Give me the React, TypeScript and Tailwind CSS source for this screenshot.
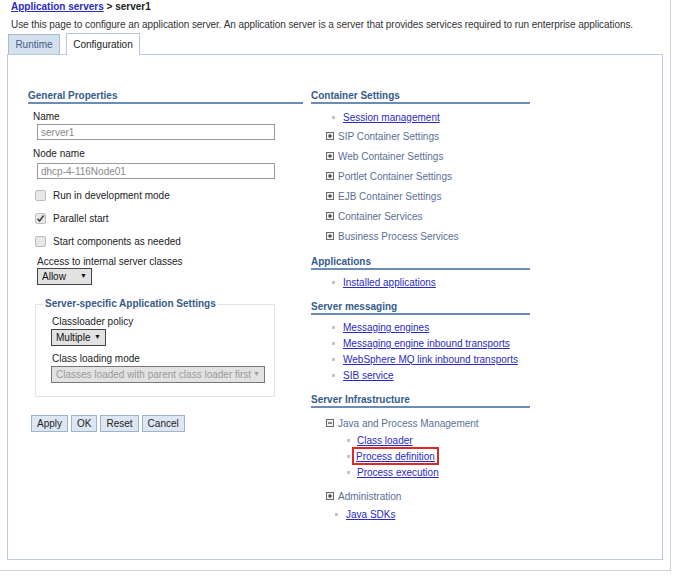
import React from "react";

const font = "font-['Liberation_Sans',Arial,sans-serif]";

function Heading({ children }: { children: React.ReactNode }) {
  return (
    <div className="border-b-2 border-[#6b8cb5] text-[10px] font-bold leading-[13px] text-[#365b8a]">
      {children}
    </div>
  );
}

function Bullet() {
  return <span className="inline-block h-[3px] w-[3px] bg-[#c4c4c4]" />;
}

function BulletLink({ label, indent, gap }: { label: string; indent: string; gap: string }) {
  return (
    <div className={`flex h-[16px] items-center ${indent}`}>
      <Bullet />
      <a href="#" className={`${gap} text-[10px] text-[#2a2ac4] underline`}>
        {label}
      </a>
    </div>
  );
}

function TreeIcon({ open }: { open?: boolean }) {
  return (
    <svg width="8" height="8" viewBox="0 0 8 8" className="shrink-0">
      <rect x="0.5" y="0.5" width="7" height="7" fill="#f2f2f2" stroke="#6a6a6a" />
      <path d="M2 4h4" stroke="#222" />
      {!open && <path d="M4 2v4" stroke="#222" />}
    </svg>
  );
}

function TreeRow({ label, open, h = "h-[20px]" }: { label: string; open?: boolean; h?: string }) {
  return (
    <div className={`flex ${h} items-center pl-[15px]`}>
      <TreeIcon open={open} />
      <span className="ml-[4px] text-[10px] text-[#5a7094]">{label}</span>
    </div>
  );
}

function Checkbox({ checked, label }: { checked?: boolean; label: string }) {
  return (
    <div className="flex h-[16px] items-center pl-[7px]">
      <span className="flex h-[11px] w-[11px] items-center justify-center rounded-[2px] border border-[#bdbdbd] bg-[#e8e8e8]">
        {checked && (
          <svg width="9" height="9" viewBox="0 0 9 9">
            <path d="M1.5 4.8 L3.6 7 L7.6 1.6" fill="none" stroke="#444" strokeWidth="1.6" />
          </svg>
        )}
      </span>
      <span className="ml-[7px] text-[10px] text-[#222]">{label}</span>
    </div>
  );
}

function Select({ value, w, disabled }: { value: string; w: string; disabled?: boolean }) {
  return (
    <div
      className={`flex h-[17px] ${w} items-center justify-between border px-[4px] text-[10px] ${
        disabled
          ? "border-[#777] bg-[#e2e2e2] text-[#9a9a9a]"
          : "border-[#444] bg-[#e2e2e2] text-[#111]"
      }`}
    >
      <span>{value}</span>
      <span className="text-[7px]">▼</span>
    </div>
  );
}

function Button({ label }: { label: string }) {
  return (
    <button className="h-[17px] border border-[#9fb2ce] bg-[#dde6f3] px-[5px] text-[10px] leading-none text-[#222]">
      {label}
    </button>
  );
}

export default function App() {
  return (
    <div className={`${font} h-[571px] w-[671px] border-r border-b border-[#d2d2d2] bg-white`}>
      <div className="pl-[11px] pt-[1px]">
        <div className="text-[10px] font-bold leading-[12px]">
          <a href="#" className="text-[#2a2ac4] underline">
            Application servers
          </a>
          <span className="text-[#222]"> &gt; server1</span>
        </div>
        <p className="mt-[6px] text-[10px] leading-[12px] tracking-[-0.06px] text-[#333]">
          Use this page to configure an application server. An application server is a server that provides
          services required to run enterprise applications.
        </p>
      </div>

      <div className="ml-[7px] mt-[2px] w-[656px]">
        <div className="flex items-end pl-[1px]">
          <div className="flex h-[20px] w-[52px] items-center justify-center border border-b-0 border-[#a9bcd6] bg-[#d5e0ee] text-[10px] text-[#3b5f8a]">
            Runtime
          </div>
          <div className="relative z-10 ml-[6px] -mb-px flex h-[22px] w-[74px] items-center justify-center border border-b-0 border-[#b6c6dd] bg-white text-[10px] text-[#222]">
            Configuration
          </div>
        </div>

        <div className="flex border border-[#bccbe0] pb-[37px] pl-[20px] pt-[34px]">
          <div className="w-[275px]">
            <Heading>General Properties</Heading>
            <div className="mt-[7px] pl-[5px] text-[10px] leading-[12px] text-[#222]">Name</div>
            <div className="ml-[9px] mt-[1px] flex h-[16px] w-[238px] items-center border border-[#9a9a9a] px-[3px] text-[10px] text-[#8a8a8a]">
              server1
            </div>
            <div className="mt-[8px] pl-[5px] text-[10px] leading-[12px] text-[#222]">Node name</div>
            <div className="ml-[9px] mt-[3px] flex h-[16px] w-[238px] items-center border border-[#9a9a9a] px-[3px] text-[10px] text-[#8a8a8a]">
              dhcp-4-116Node01
            </div>
            <div className="mt-[8px] flex flex-col gap-[7px]">
              <Checkbox label="Run in development mode" />
              <Checkbox checked label="Parallel start" />
              <Checkbox label="Start components as needed" />
            </div>
            <div className="mt-[7px] pl-[9px] text-[10px] leading-[12px] text-[#222]">
              Access to internal server classes
            </div>
            <div className="pl-[9px]">
              <Select value="Allow" w="w-[55px]" />
            </div>

            <fieldset className="ml-[7px] mt-[13px] w-[240px] border border-[#e4e4e4] pb-[13px] pl-[8px]">
              <legend className="px-[1px] text-[10px] font-bold leading-[12px] text-[#365b8a]">
                Server-specific Application Settings
              </legend>
              <div className="pl-[8px]">
                <div className="mt-[6px] text-[10px] leading-[12px] text-[#222]">Classloader policy</div>
                <div className="-ml-px mt-[1px]">
                  <Select value="Multiple" w="w-[55px]" />
                </div>
                <div className="mt-[7px] text-[10px] leading-[12px] text-[#222]">Class loading mode</div>
                <div className="-ml-px mt-[1px]">
                  <Select value="Classes loaded with parent class loader first" w="w-[214px]" disabled />
                </div>
              </div>
            </fieldset>

            <div className="ml-[3px] mt-[18px] flex gap-[3px]">
              <Button label="Apply" />
              <Button label="OK" />
              <Button label="Reset" />
              <Button label="Cancel" />
            </div>
          </div>

          <div className="ml-[8px] w-[219px]">
            <Heading>Container Settings</Heading>
            <div className="mt-[5px]">
              <BulletLink label="Session management" indent="pl-[21px]" gap="ml-[8px]" />
            </div>
            <div className="mt-[1px]">
              <TreeRow label="SIP Container Settings" />
              <TreeRow label="Web Container Settings" />
              <TreeRow label="Portlet Container Settings" />
              <TreeRow label="EJB Container Settings" />
              <TreeRow label="Container Services" />
              <TreeRow label="Business Process Services" />
            </div>

            <div className="mt-[9px]">
              <Heading>Applications</Heading>
            </div>
            <div className="mt-[4px]">
              <BulletLink label="Installed applications" indent="pl-[21px]" gap="ml-[8px]" />
            </div>

            <div className="mt-[10px]">
              <Heading>Server messaging</Heading>
            </div>
            <div className="mt-[4px]">
              <BulletLink label="Messaging engines" indent="pl-[21px]" gap="ml-[8px]" />
              <BulletLink label="Messaging engine inbound transports" indent="pl-[21px]" gap="ml-[8px]" />
              <BulletLink label="WebSphere MQ link inbound transports" indent="pl-[21px]" gap="ml-[8px]" />
              <BulletLink label="SIB service" indent="pl-[21px]" gap="ml-[8px]" />
            </div>

            <div className="mt-[10px]">
              <Heading>Server Infrastructure</Heading>
            </div>
            <div className="mt-[7px]">
              <TreeRow label="Java and Process Management" open h="h-[16px]" />
            </div>
            <div className="mt-[1px]">
              <BulletLink label="Class loader" indent="pl-[36px]" gap="ml-[7px]" />
              <div className="flex h-[16px] items-center pl-[36px]">
                <Bullet />
                <span className="ml-[2px] border-2 border-[#e0282a] px-[2px] leading-[12px]">
                  <a href="#" className="text-[10px] text-[#2a2ac4] underline">
                    Process definition
                  </a>
                </span>
              </div>
              <BulletLink label="Process execution" indent="pl-[36px]" gap="ml-[7px]" />
            </div>
            <div className="mt-[8px]">
              <TreeRow label="Administration" h="h-[16px]" />
            </div>
            <div className="mt-[2px]">
              <BulletLink label="Java SDKs" indent="pl-[24px]" gap="ml-[8px]" />
            </div>
          </div>
        </div>
      </div>
    </div>
  );
}
